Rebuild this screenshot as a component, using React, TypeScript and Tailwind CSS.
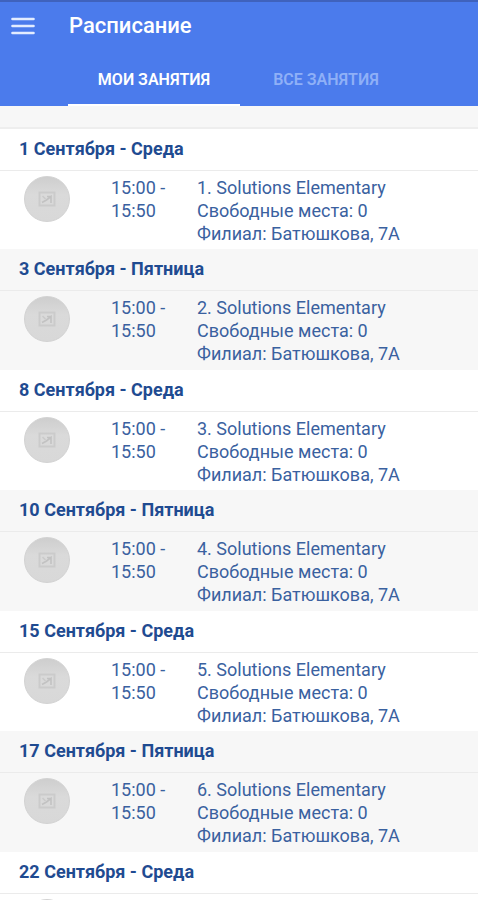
import React, { useState } from "react";
import clsx from "clsx";

interface Lesson {
  date: string;
  start: string;
  end: string;
  title: string;
  seats: number;
  branch: string;
}

const DATES = [
  "1 Сентября - Среда",
  "3 Сентября - Пятница",
  "8 Сентября - Среда",
  "10 Сентября - Пятница",
  "15 Сентября - Среда",
  "17 Сентября - Пятница",
  "22 Сентября - Среда",
];

const lessons: Lesson[] = DATES.map((date, idx) => ({
  date,
  start: "15:00",
  end: "15:50",
  title: `${idx + 1}. Solutions Elementary`,
  seats: 0,
  branch: "Батюшкова, 7А",
}));

const TABS = ["Мои занятия", "Все занятия"];

const MenuIcon = () => (
  <svg width="24" height="18" viewBox="0 0 24 18" aria-hidden="true">
    <path
      d="M1.5 2H22.5M1.5 9H22.5M1.5 16H22.5"
      stroke="#e3ecff"
      strokeWidth="2.6"
      strokeLinecap="round"
    />
  </svg>
);

// Placeholder shown when a lesson has no teacher photo
const Avatar = () => (
  <div className="flex size-[46px] items-center justify-center rounded-full border border-[#d2d2d2] bg-linear-to-b from-[#cecece] via-[#dadada] via-40% to-[#d8d8d8]">
    <svg width="18" height="16" viewBox="0 0 18 16" fill="none" aria-hidden="true">
      <rect x="1.5" y="1.5" width="15" height="13" stroke="#cbcbcb" strokeWidth="2" />
      <path d="M4.5 5L7.5 8" stroke="#cacaca" strokeWidth="1.6" />
      <path d="M4 11.5L8.5 9L13 5.5V12M9 5.5H13" stroke="#c2c2c2" strokeWidth="1.6" />
    </svg>
  </div>
);

const LessonCard = ({ lesson }: { lesson: Lesson }) => (
  <li className="bg-white even:border-b even:border-[#f7f7f7] even:bg-[#f7f7f7]">
    <h2 className="border-b border-[#ebebeb] px-[19px] pt-2 pb-[9px] text-lg leading-6 font-bold text-[#1f4b91]">
      {lesson.date}
    </h2>
    <div className="flex pt-[5px] pb-1 pl-6 text-lg leading-[23px]">
      <div className="w-[87px] shrink-0">
        <Avatar />
      </div>
      <p className="w-[86px] shrink-0">
        {lesson.start} -<br />
        {lesson.end}
      </p>
      <div>
        <p>{lesson.title}</p>
        <p>Свободные места: {lesson.seats}</p>
        <p>Филиал: {lesson.branch}</p>
      </div>
    </div>
  </li>
);

export default function App() {
  const [active, setActive] = useState(0);

  return (
    <div className="flex h-screen flex-col bg-[#f7f7f7] font-['Roboto',sans-serif] text-[#3a619f]">
      <header className="border-t-2 border-[#3f62bd] bg-[#4b7bec] text-white">
        <div className="flex h-12 items-center gap-[34px] px-[11px]">
          <button type="button" aria-label="Меню">
            <MenuIcon />
          </button>
          <h1 className="text-[22px] leading-7 font-medium">Расписание</h1>
        </div>
        <nav className="flex pl-[68px]" role="tablist">
          {TABS.map((tab, idx) => (
            <button
              key={tab}
              type="button"
              role="tab"
              aria-selected={active === idx}
              onClick={() => setActive(idx)}
              className={clsx(
                "h-14 w-[172px] border-b-2 pt-1.5 text-base font-semibold uppercase",
                active === idx
                  ? "border-white text-white"
                  : "border-transparent text-[#8fb0f7]",
              )}
            >
              {tab}
            </button>
          ))}
        </nav>
      </header>

      <main className="min-h-0 flex-1 overflow-y-auto pt-[21px] [scrollbar-width:none]">
        <ul className="border-t-2 border-[#eeeeee]">
          {lessons.map((lesson) => (
            <LessonCard key={lesson.date} lesson={lesson} />
          ))}
        </ul>
      </main>
    </div>
  );
}
